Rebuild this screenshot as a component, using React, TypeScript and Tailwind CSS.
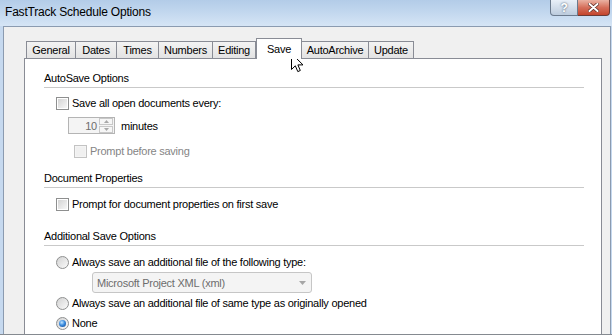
import React from "react";

const tabs = [
  { label: "General", w: "w-[50px]" },
  { label: "Dates", w: "w-[41px]" },
  { label: "Times", w: "w-[42px]" },
  { label: "Numbers", w: "w-[54px]" },
  { label: "Editing", w: "w-[43px]" },
  { label: "Save", w: "w-[46px]", active: true },
  { label: "AutoArchive", w: "w-[67px]" },
  { label: "Update", w: "w-[45px]" },
];

const Checkbox = ({ disabled }: { disabled?: boolean }) => (
  <div
    className={
      disabled
        ? "w-[13px] h-[13px] border border-[#c3c3c3] bg-[#f4f4f4] p-px"
        : "w-[13px] h-[13px] border border-[#8e8f8f] bg-white p-px"
    }
  >
    <div
      className={
        disabled
          ? "w-full h-full bg-[#f0f0f0]"
          : "w-full h-full bg-linear-to-br from-[#d4d4d4] to-[#f7f7f7]"
      }
    />
  </div>
);

const Radio = ({ checked }: { checked?: boolean }) => (
  <div className="w-[13px] h-[13px] rounded-full border border-[#8e8f8f] bg-linear-to-br from-[#d2d2d2] to-[#fbfbfb] flex items-center justify-center">
    {checked && (
      <div className="w-[7px] h-[7px] rounded-full bg-[radial-gradient(circle_at_40%_35%,#c4e6ff_0%,#3b8de0_45%,#0f3f86_100%)]" />
    )}
  </div>
);

const Heading = ({ title, top }: { title: string; top: string }) => (
  <>
    <div className={`${top} h-[14px] leading-[14px]`}>{title}</div>
    <div className="mt-[2px] h-px bg-[#c9c9c9]" />
  </>
);

const TitleBar = () => (
  <div className="h-[26px] flex justify-between pl-[5px] pr-[2px] bg-linear-to-b from-[#b3cce8] via-[#c3d8ef] to-[#d6e5f5]">
    <div className="pt-[5px] text-[12px] tracking-[-0.2px] leading-[14px] text-black">
      FastTrack Schedule Options
    </div>
    <div className="flex self-start">
      <div className="w-[28px] h-[16px] rounded-bl-[4px] border border-t-0 border-[#6b7a8d] bg-linear-to-b from-[#e9f0f8] to-[#bccbdd] flex items-center justify-center text-[12px] font-bold leading-none text-white [text-shadow:0_0_2px_#37475a]">
        ?
      </div>
      <div className="w-[32px] h-[16px] rounded-br-[4px] border border-t-0 border-l-0 border-[#6b3b36] bg-linear-to-b from-[#eab2a3] via-[#d56f5b] to-[#c4442c] flex items-center justify-center">
        <svg width="11" height="9" viewBox="0 0 11 9">
          <path d="M1.5 1 L9.5 8 M9.5 1 L1.5 8" stroke="#5a2a24" strokeWidth="3.4" strokeLinecap="round" />
          <path d="M1.5 1 L9.5 8 M9.5 1 L1.5 8" stroke="#ffffff" strokeWidth="2" strokeLinecap="round" />
        </svg>
      </div>
    </div>
  </div>
);

export default function App() {
  return (
    <div className="relative w-[612px] h-[335px] overflow-hidden bg-[#c6d9ef] flex flex-col font-['Liberation_Sans',Arial,sans-serif] text-[11px] tracking-[-0.25px] text-black">
      <TitleBar />
      <div className="flex-1 ml-[3px] mr-[1px] flex flex-col border-l border-t border-r border-[#8b9bb0] bg-[#f0f0f0] pt-[11px] pl-[20px] pr-[8px]">
        <div className="flex items-end h-[21px] pl-[2px] -mb-px relative z-10">
          {tabs.map((t) =>
            t.active ? (
              <div
                key={t.label}
                className={`${t.w} h-[21px] border border-b-0 border-[#898c95] bg-white flex justify-center pt-[3px] leading-[14px]`}
              >
                {t.label}
              </div>
            ) : (
              <div
                key={t.label}
                className={`${t.w} h-[18px] border border-l-0 first:border-l border-[#898c95] bg-linear-to-b from-[#f3f3f3] to-[#e3e3e3] flex items-center justify-center leading-[14px]`}
              >
                {t.label}
              </div>
            )
          )}
        </div>
        <div className="flex-1 border border-b-0 border-[#898c95] bg-white pl-[19px] pr-[17px] flex flex-col">
          <Heading title="AutoSave Options" top="mt-[12px]" />
          <div className="mt-[8px] ml-[12px] h-[14px] flex items-center gap-[3px] leading-[14px]">
            <Checkbox />
            <span>Save all open documents every:</span>
          </div>
          <div className="mt-[7px] ml-[24px] h-[17px] flex items-center gap-[6px]">
            <div className="w-[47px] h-[17px] border border-[#b4b4b4] bg-[#f4f4f4] flex items-center justify-end pr-px">
              <span className="text-[#6d6d6d] leading-[14px] mr-[2px]">10</span>
              <div className="flex flex-col w-[14px] h-[15px] gap-px">
                <div className="flex-1 border border-[#c8c8c8] bg-[#f6f6f6] flex items-center justify-center">
                  <svg width="5" height="3" viewBox="0 0 5 3">
                    <path d="M0 3 L2.5 0 L5 3 Z" fill="#a8a8a8" />
                  </svg>
                </div>
                <div className="flex-1 border border-[#c8c8c8] bg-[#f6f6f6] flex items-center justify-center">
                  <svg width="5" height="3" viewBox="0 0 5 3">
                    <path d="M0 0 L2.5 3 L5 0 Z" fill="#a8a8a8" />
                  </svg>
                </div>
              </div>
            </div>
            <span className="leading-[14px]">minutes</span>
          </div>
          <div className="mt-[10px] ml-[30px] h-[14px] flex items-center gap-[3px] leading-[14px]">
            <Checkbox disabled />
            <span className="text-[#858585]">Prompt before saving</span>
          </div>
          <Heading title="Document Properties" top="mt-[13px]" />
          <div className="mt-[9px] ml-[12px] h-[14px] flex items-center gap-[3px] leading-[14px]">
            <Checkbox />
            <span>Prompt for document properties on first save</span>
          </div>
          <Heading title="Additional Save Options" top="mt-[18px]" />
          <div className="mt-[9px] ml-[12px] h-[14px] flex items-center gap-[3px] leading-[14px]">
            <Radio />
            <span>Always save an additional file of the following type:</span>
          </div>
          <div className="mt-[3px] ml-[48px] w-[220px] h-[21px] rounded-[3px] border border-[#c6c6c6] bg-[#f4f4f4] flex items-center justify-between pl-[4px] pr-[5px]">
            <span className="text-[#6d6d6d] leading-[14px]">Microsoft Project XML (xml)</span>
            <svg width="7" height="4" viewBox="0 0 7 4">
              <path d="M0 0 L3.5 4 L7 0 Z" fill="#a6a6a6" />
            </svg>
          </div>
          <div className="mt-[3px] ml-[12px] h-[14px] flex items-center gap-[3px] leading-[14px]">
            <Radio />
            <span>Always save an additional file of same type as originally opened</span>
          </div>
          <div className="mt-[6px] ml-[12px] h-[14px] flex items-center gap-[3px] leading-[14px]">
            <Radio checked />
            <span>None</span>
          </div>
        </div>
      </div>
      <div className="h-px bg-[#858a90]" />
      <svg
        className="absolute left-[291px] top-[53px]"
        width="13"
        height="20"
        viewBox="0 0 13 20"
      >
        <path
          d="M0.5 0.5 L0.5 16.5 L4.3 12.8 L6.8 18.6 L9.3 17.5 L6.9 11.9 L12 11.9 Z"
          fill="#ffffff"
          stroke="#000000"
          strokeWidth="1"
          strokeLinejoin="miter"
        />
      </svg>
    </div>
  );
}
